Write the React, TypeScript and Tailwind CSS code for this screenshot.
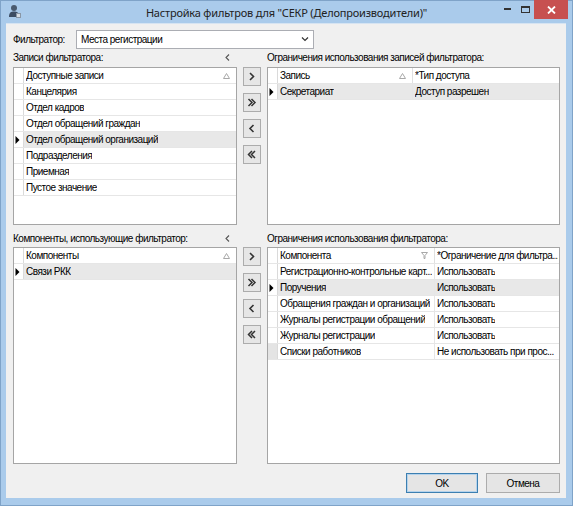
import React from "react";

type Col = { title: string; w?: number; icon?: "sort" | "filter" };

function SortIcon() {
  return (
    <svg width="7" height="6" viewBox="0 0 7 6" className="shrink-0">
      <path d="M3.5 0.5 L6.5 5.5 L0.5 5.5 Z" fill="none" stroke="#a8a8a8" strokeWidth="1" />
    </svg>
  );
}
function FilterIcon() {
  return (
    <svg width="7" height="7" viewBox="0 0 7 7" className="shrink-0">
      <path d="M0.5 0.5 L6.5 0.5 L4 3.5 L4 6.5 L3 6.5 L3 3.5 Z" fill="none" stroke="#a8a8a8" strokeWidth="1" />
    </svg>
  );
}
function RowArrow() {
  return (
    <svg width="5" height="8" viewBox="0 0 5 8">
      <path d="M0.5 0 L4.5 4 L0.5 8 Z" fill="#000" />
    </svg>
  );
}

function Grid({
  cols,
  rows,
  selected,
  grayIndicator,
  h,
}: {
  cols: Col[];
  rows: string[][];
  selected: number;
  grayIndicator?: number;
  h: string;
}) {
  return (
    <div className={`${h} border border-[#a5a5a5] bg-white flex flex-col overflow-hidden`}>
      <div className="flex h-[16px] border-b border-[#e6e6e6] shrink-0">
        <div className="w-[10px] border-r border-[#dadada] shrink-0" />
        {cols.map((c, i) => (
          <div
            key={i}
            className={`flex items-center pl-[2px] overflow-hidden ${
              c.w ? "pr-[6px] shrink-0 border-r border-[#e0e0e0]" : c.icon ? "pr-[6px] flex-1 min-w-0" : "pr-[1px] flex-1 min-w-0"
            }`}
            style={c.w ? { width: c.w } : undefined}
          >
            <span className="flex-1 min-w-0 whitespace-nowrap overflow-hidden leading-[15px] text-black">{c.title}</span>
            {c.icon === "sort" && <SortIcon />}
            {c.icon === "filter" && <FilterIcon />}
          </div>
        ))}
      </div>
      {rows.map((r, ri) => (
        <div
          key={ri}
          className={`flex h-[16px] border-b border-[#e6e6e6] shrink-0 ${ri === selected ? "bg-[#e8e8e8]" : ""}`}
        >
          <div
            className={`w-[10px] border-r border-[#dadada] shrink-0 flex items-center pl-[1px] ${
              ri === grayIndicator ? "bg-[#e4e4e4]" : ri === selected ? "bg-white" : ""
            }`}
          >
            {ri === selected && <RowArrow />}
          </div>
          {r.map((v, ci) => (
            <div
              key={ci}
              className={`flex items-center pl-[2px] overflow-hidden ${
                cols[ci].w ? "shrink-0 border-r border-[#e6e6e6]" : "flex-1 min-w-0"
              }`}
              style={cols[ci].w ? { width: cols[ci].w } : undefined}
            >
              <span className="whitespace-nowrap overflow-hidden leading-[15px] text-black">{v}</span>
            </div>
          ))}
        </div>
      ))}
    </div>
  );
}

function Chev({ dir, double }: { dir: "r" | "l"; double?: boolean }) {
  const one = (x: number) =>
    dir === "r" ? `M${x} 1 L${x + 3.5} 4.5 L${x} 8` : `M${x + 3.5} 1 L${x} 4.5 L${x + 3.5} 8`;
  return (
    <svg width="10" height="9" viewBox="0 0 10 9">
      {double ? (
        <>
          <path d={one(1.5)} fill="none" stroke="#333" strokeWidth="1.5" />
          <path d={one(4.5)} fill="none" stroke="#333" strokeWidth="1.5" />
        </>
      ) : (
        <path d={one(3)} fill="none" stroke="#333" strokeWidth="1.6" />
      )}
    </svg>
  );
}

function ArrowBtn({ dir, double }: { dir: "r" | "l"; double?: boolean }) {
  return (
    <div className="w-[18px] h-[19px] border border-[#acacac] bg-[#e6e6e6] flex items-center justify-center">
      <Chev dir={dir} double={double} />
    </div>
  );
}

function Buttons() {
  return (
    <div className="flex flex-col items-center gap-[7px]">
      <ArrowBtn dir="r" />
      <ArrowBtn dir="r" double />
      <ArrowBtn dir="l" />
      <ArrowBtn dir="l" double />
    </div>
  );
}

function SmallLeft() {
  return (
    <svg width="5" height="7" viewBox="0 0 5 7" className="shrink-0">
      <path d="M4 0.5 L1 3.5 L4 6.5" fill="none" stroke="#555" strokeWidth="1.1" />
    </svg>
  );
}

export default function App() {
  return (
    <div className="w-[573px] h-[506px] bg-[#aacbeb] border border-[#7fa3c8] flex flex-col font-['Liberation_Sans',Arial,sans-serif] text-[10px] tracking-[-0.5px] select-none">
      {/* title bar */}
      <div className="h-[22px] flex items-start relative shrink-0">
        <div className="absolute left-[7px] top-[3px]">
          <svg width="14" height="15" viewBox="0 0 14 15">
            <circle cx="6" cy="4" r="3" fill="#4a5a6e" />
            <path d="M1 13 C1 8.5 3 7.5 6 7.5 C9 7.5 11 8.5 11 13 Z" fill="#3d4d63" />
            <rect x="8" y="9" width="5" height="5" fill="#8a97a6" />
            <rect x="9" y="10" width="3" height="3" fill="#d8dee5" />
          </svg>
        </div>
        <div className="flex-1 text-center text-[11px] tracking-[-0.2px] leading-[22px] text-[#222] font-['Noto_Sans',sans-serif] pt-[1px]">
          Настройка фильтров для "СЕКР (Делопроизводители)"
        </div>
        <div className="absolute right-[4px] top-[-1px] flex items-start">
          <div className="w-[18px] h-[18px] flex items-center justify-center">
            <div className="w-[7px] h-[2px] bg-[#333]" />
          </div>
          <div className="w-[18px] h-[18px] flex items-center justify-center">
            <div className="w-[9px] h-[7px] border border-[#333] border-t-2" />
          </div>
          <div className="w-[34px] h-[19px] bg-[#c75050] flex items-center justify-center">
            <svg width="9" height="8" viewBox="0 0 9 8">
              <path d="M1 0.5 L8 7.5 M8 0.5 L1 7.5" stroke="#fff" strokeWidth="1.8" />
            </svg>
          </div>
        </div>
      </div>

      {/* content */}
      <div className="ml-[5px] mr-[6px] mb-[7px] flex-1 bg-[#f0f0f0] border-t border-[#d6e4f2] flex flex-col px-[7px] pr-[6px]">
        <div className="flex items-center mt-[6px] h-[19px]">
          <div className="w-[63px] text-black">Фильтратор:</div>
          <div className="w-[238px] h-[19px] border border-[#abadb3] bg-white flex items-center pl-[4px] pr-[4px]">
            <span className="flex-1 text-black">Места регистрации</span>
            <svg width="8" height="5" viewBox="0 0 8 5">
              <path d="M1 0.5 L4 3.5 L7 0.5" fill="none" stroke="#333" strokeWidth="1.2" />
            </svg>
          </div>
        </div>

        {/* top section */}
        <div className="grid grid-cols-[224px_30px_1fr] mt-[1px]">
          <div className="flex items-center h-[17px] pb-[3px] pr-[7px]">
            <span className="flex-1 text-black">Записи фильтратора:</span>
            <SmallLeft />
          </div>
          <div />
          <div className="flex items-center h-[17px] pb-[3px]">
            <span className="text-black">Ограничения использования записей фильтратора:</span>
          </div>
          <Grid
            h="h-[158px]"
            cols={[{ title: "Доступные записи", icon: "sort" }]}
            rows={[
              ["Канцелярия"],
              ["Отдел кадров"],
              ["Отдел обращений граждан"],
              ["Отдел обращений организаций"],
              ["Подразделения"],
              ["Приемная"],
              ["Пустое значение"],
            ]}
            selected={3}
          />
          <Buttons />
          <Grid
            h="h-[158px]"
            cols={[
              { title: "Запись", w: 135, icon: "sort" },
              { title: "*Тип доступа" },
            ]}
            rows={[["Секретариат", "Доступ разрешен"]]}
            selected={0}
          />
        </div>

        {/* bottom section */}
        <div className="grid grid-cols-[224px_30px_1fr] mt-[5px]">
          <div className="flex items-center h-[17px] pb-[1px] pr-[7px]">
            <span className="flex-1 whitespace-nowrap text-black">Компоненты, использующие фильтратор:</span>
            <SmallLeft />
          </div>
          <div />
          <div className="flex items-center h-[17px] pb-[1px]">
            <span className="text-black">Ограничения использования фильтратора:</span>
          </div>
          <Grid
            h="h-[217px]"
            cols={[{ title: "Компоненты", icon: "sort" }]}
            rows={[["Связи РКК"]]}
            selected={0}
          />
          <Buttons />
          <Grid
            h="h-[217px]"
            cols={[
              { title: "Компонента", w: 157, icon: "filter" },
              { title: "*Ограничение для фильтра..." },
            ]}
            rows={[
              ["Регистрационно-контрольные карт...", "Использовать"],
              ["Поручения", "Использовать"],
              ["Обращения граждан и организаций", "Использовать"],
              ["Журналы регистрации обращений", "Использовать"],
              ["Журналы регистрации", "Использовать"],
              ["Списки работников", "Не использовать при прос..."],
            ]}
            selected={1}
            grayIndicator={5}
          />
        </div>

        {/* dialog buttons */}
        <div className="flex justify-end gap-[8px] mt-[9px]">
          <div className="w-[72px] h-[20px] border border-[#3c7fb1] bg-[#e5e5e5] flex items-center justify-center text-black shadow-[inset_0_0_0_1px_#b5d3ec]">
            OK
          </div>
          <div className="w-[74px] h-[20px] border border-[#acacac] bg-[#e5e5e5] flex items-center justify-center text-black">
            Отмена
          </div>
        </div>
      </div>
    </div>
  );
}
